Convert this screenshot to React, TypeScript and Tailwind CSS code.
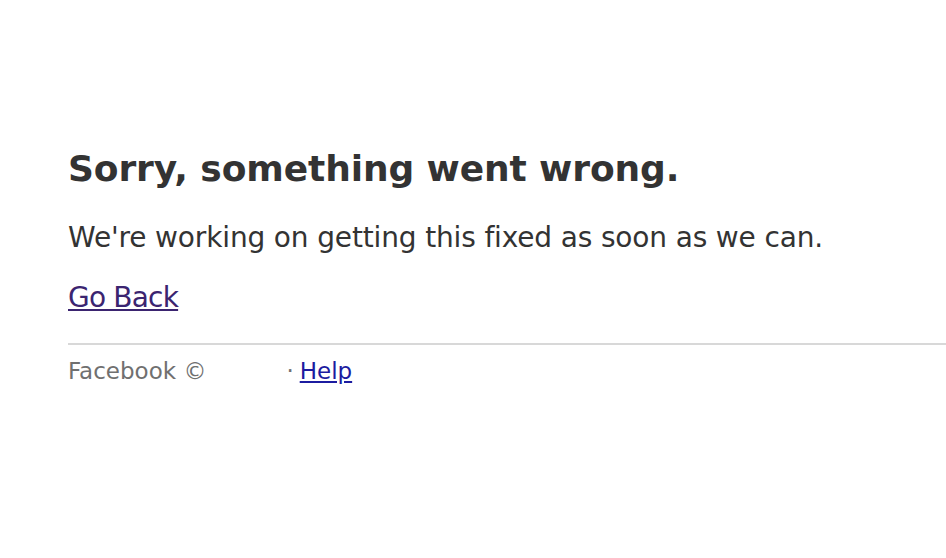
export default function App() {
  return (
    <div
      className="min-h-[558px] w-[946px] overflow-hidden bg-white pt-[147px]"
      style={{ fontFamily: '"DejaVu Sans", "Liberation Sans", sans-serif' }}
    >
      <div className="pl-[68px]">
        <h1 className="text-[36px] leading-[44px] font-bold tracking-[-0.1px] text-[#333333]">
          Sorry, something went wrong.
        </h1>
        <p className="mt-[30px] text-[28px] leading-[34px] tracking-[-0.15px] text-[#333333]">
          We're working on getting this fixed as soon as we can.
        </p>
        <p className="mt-[26px] text-[28px] leading-[34px] tracking-[-0.8px]">
          <a href="#" className="text-[#3b2470] underline">
            Go Back
          </a>
        </p>
      </div>
      <div className="ml-[68px] mt-[28px] border-t-2 border-[#d8d8d8] pt-[11px]">
        <div className="flex items-center text-[23px] leading-[30px] text-[#707070]">
          <span>Facebook ©</span>
          <span className="w-[80px]" />
          <span className="mr-[6px]">·</span>
          <a href="#" className="text-[#1c1ca0] underline">
            Help
          </a>
        </div>
      </div>
    </div>
  );
}
